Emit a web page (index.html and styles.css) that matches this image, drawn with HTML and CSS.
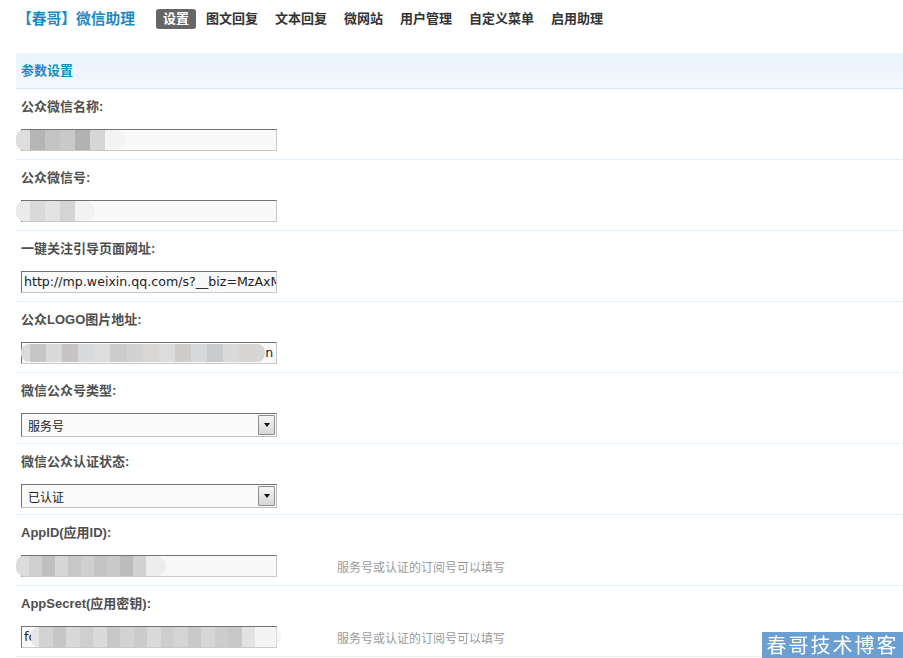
FILE: index.html
```html
<!DOCTYPE html>
<html lang="zh-CN">
<head>
<meta charset="utf-8">
<title>【春哥】微信助理 - 设置</title>
<link rel="stylesheet" href="styles.css">
</head>
<body>
<header class="topbar">
  <h1 class="brand">【春哥】微信助理</h1>
  <nav class="nav">
    <a class="nav-item active">设置</a>
    <a class="nav-item">图文回复</a>
    <a class="nav-item">文本回复</a>
    <a class="nav-item">微网站</a>
    <a class="nav-item">用户管理</a>
    <a class="nav-item">自定义菜单</a>
    <a class="nav-item">启用助理</a>
  </nav>
</header>

<section class="panel">
  <div class="panel-head">参数设置</div>

  <div class="row">
    <div class="label">公众微信名称:</div>
    <div class="line">
      <div class="field">
        <span class="mosaic m1">
          <i class="cap" style="background:#dedede"></i><i style="background:#b5b5b5"></i><i style="background:#c4c4c4"></i><i style="background:#c9c9c9"></i><i style="background:#b2b2b2"></i><i style="background:#d6d6d6"></i><i class="fade" style="background:#eeeeee"></i>
        </span>
      </div>
    </div>
  </div>

  <div class="row">
    <div class="label">公众微信号:</div>
    <div class="line">
      <div class="field">
        <span class="mosaic m2">
          <i class="cap" style="background:#ebebeb"></i><i style="background:#d9d9d9"></i><i style="background:#e3e3e3"></i><i style="background:#d4d4d4"></i><i class="fade" style="background:#ededed"></i>
        </span>
      </div>
    </div>
  </div>

  <div class="row">
    <div class="label">一键关注引导页面网址:</div>
    <div class="line">
      <div class="field"><span class="value">http://mp.weixin.qq.com/s?__biz=MzAxM</span></div>
    </div>
  </div>

  <div class="row">
    <div class="label">公众LOGO图片地址:</div>
    <div class="line">
      <div class="field">
        <span class="mosaic m4">
          <i class="cap" style="background:#dcdcdc"></i><i style="background:#c6c6c6"></i><i style="background:#dadada"></i><i style="background:#c9c3c3"></i><i style="background:#d8dadc"></i><i style="background:#dedede"></i><i style="background:#cccccc"></i><i style="background:#d2d2d2"></i><i style="background:#dad6d6"></i><i style="background:#dcdcdc"></i><i style="background:#d1cccc"></i><i style="background:#d6d8da"></i><i style="background:#c9cacc"></i><i style="background:#dadada"></i><i style="background:#d7d4d4"></i><i class="endcap" style="background:#d6d6d6"></i>
        </span><span class="value tail">n</span>
      </div>
    </div>
  </div>

  <div class="row">
    <div class="label">微信公众号类型:</div>
    <div class="line">
      <div class="select">
        <span class="select-text">服务号</span>
        <span class="select-btn"><span class="tri"></span></span>
      </div>
    </div>
  </div>

  <div class="row">
    <div class="label">微信公众认证状态:</div>
    <div class="line">
      <div class="select">
        <span class="select-text">已认证</span>
        <span class="select-btn"><span class="tri"></span></span>
      </div>
    </div>
  </div>

  <div class="row">
    <div class="label">AppID(应用ID):</div>
    <div class="line">
      <div class="field">
        <span class="mosaic m7">
          <i class="cap" style="background:#dcdcdc"></i><i style="background:#cfcfcf"></i><i style="background:#bfbfbf"></i><i style="background:#d6d6d6"></i><i style="background:#c7c7c7"></i><i style="background:#d0d0d0"></i><i style="background:#c4c4c4"></i><i style="background:#c9c9c9"></i><i style="background:#bcbcbc"></i><i style="background:#d2d2d2"></i><i class="fade" style="background:#e4e4e4"></i>
        </span>
      </div>
      <span class="hint">服务号或认证的订阅号可以填写</span>
    </div>
  </div>

  <div class="row">
    <div class="label">AppSecret(应用密钥):</div>
    <div class="line">
      <div class="field">
        <span class="value head">fc</span><span class="mosaic m8">
          <i class="cap" style="background:#e6e6e6"></i><i style="background:#d3d3d3"></i><i style="background:#c6c6c6"></i><i style="background:#d8d8d8"></i><i style="background:#cfcfcf"></i><i style="background:#dadada"></i><i style="background:#c8c8c8"></i><i style="background:#d3d3d3"></i><i style="background:#cbcbcb"></i><i style="background:#d9d9d9"></i><i style="background:#cecece"></i><i style="background:#d4d4d4"></i><i style="background:#c9c9c9"></i><i style="background:#d6d6d6"></i><i style="background:#cdcdcd"></i><i style="background:#c8c8c8"></i><i style="background:#e2e2e2"></i><i class="fade" style="background:#efefef"></i>
        </span>
      </div>
      <span class="hint">服务号或认证的订阅号可以填写</span>
    </div>
  </div>
</section>

<div class="watermark">春哥技术博客</div>
</body>
</html>
```
FILE: styles.css
```css
* { box-sizing: border-box; }

html, body {
  margin: 0;
  padding: 0;
  background: #ffffff;
}

body {
  font-family: "Liberation Sans", "Noto Sans CJK SC", sans-serif;
  font-size: 13px;
  color: #333;
  overflow: hidden;
}

/* ---------- top bar ---------- */
.topbar {
  height: 53px;
  padding: 9px 0 0 17px;
  display: flex;
  align-items: flex-start;
}

.brand {
  margin: 0;
  font-size: 14.75px;
  line-height: 22px;
  height: 22px;
  font-weight: bold;
  color: #1b8bc4;
  margin-top: -1px;
}

.nav {
  display: flex;
  gap: 3px;
  margin-left: 21px;
}

.nav-item {
  display: block;
  height: 20px;
  line-height: 20px;
  padding: 0 7px;
  font-size: 13px;
  font-weight: bold;
  color: #333;
  border-radius: 3px;
  cursor: pointer;
}

.nav-item.active {
  background: #666666;
  color: #ffffff;
}

/* ---------- panel ---------- */
.panel {
  margin-left: 16px;
}

.panel-head {
  height: 36px;
  line-height: 35px;
  padding-left: 5px;
  font-size: 13px;
  font-weight: bold;
  color: #1b8bc4;
  background: linear-gradient(#ebf3fb, #f3f8fd);
  border-bottom: 1px dotted #c6d8e6;
}

.row {
  height: 71px;
  padding: 9px 0 0 5px;
  border-bottom: 1px dotted #d4e1ea;
}

.label {
  height: 18px;
  line-height: 18px;
  margin-bottom: 13px;
  font-size: 13px;
  font-weight: bold;
  color: #4f4f4f;
}

.line {
  display: flex;
  align-items: center;
}

/* ---------- text field ---------- */
.field {
  width: 256px;
  height: 22px;
  flex: none;
  display: flex;
  align-items: center;
  background: #f9f9f9;
  border-style: solid;
  border-width: 1px;
  border-color: #727272 #c9c9c9 #c9c9c9 #727272;
  overflow: visible;
  white-space: nowrap;
}

.value {
  display: block;
  padding-left: 2px;
  font-family: "DejaVu Sans", "Liberation Sans", sans-serif;
  font-size: 12.6px;
  color: #222;
  overflow: hidden;
  width: 100%;
  line-height: 20px;
}

.value.tail {
  width: auto;
  padding-left: 0;
}

.value.head {
  width: auto;
  flex: none;
  padding-left: 2px;
}

.mosaic {
  display: flex;
  height: 20px;
  flex: none;
}

.mosaic i {
  display: block;
  width: 15px;
  height: 20px;
}

.mosaic i.cap {
  width: 14px;
  border-radius: 8px 0 0 8px;
}

.mosaic i.fade {
  width: 20px;
  border-radius: 0 10px 10px 0;
  opacity: .6;
}

.mosaic i.endcap {
  width: 10px;
  border-radius: 0 8px 8px 0;
}

.m1 { margin-left: -6px; }
.m2 { margin-left: -6px; }
.m4 { margin-left: -1px; height: 18px; }
.m4 i { height: 18px; width: 16.1px; }
.m4 i.cap { width: 9px; }
.m7 { margin-left: -6px; }
.m7 i { width: 13px; }
.m7 i.cap { width: 13px; }
.m8 { margin-left: -4px; }
.m8 i { width: 13.5px; }
.m8 i.cap { width: 8px; }
.m8 i.fade { width: 26px; }

/* ---------- select ---------- */
.select {
  width: 256px;
  height: 24px;
  flex: none;
  display: flex;
  align-items: center;
  justify-content: space-between;
  background: #fafafa;
  border-style: solid;
  border-width: 1px;
  border-color: #727272 #bdbdbd #bdbdbd #727272;
  padding-right: 1px;
}

.select-text {
  padding-left: 6px;
  font-family: "Noto Sans CJK SC", sans-serif;
  font-size: 12px;
  color: #222;
}

.select-btn {
  width: 17px;
  height: 20px;
  display: flex;
  align-items: center;
  justify-content: center;
  background: linear-gradient(#f6f6f6, #d6d6d6);
  border: 1px solid #8c8c8c;
  border-radius: 1px;
}

.tri {
  width: 0;
  height: 0;
  border-left: 3.5px solid transparent;
  border-right: 3.5px solid transparent;
  border-top: 4px solid #111;
}

/* ---------- hint ---------- */
.hint {
  margin-left: 60px;
  font-family: "Noto Sans CJK SC", sans-serif;
  font-size: 12px;
  color: #9a9a9a;
}

/* ---------- watermark ---------- */
.watermark {
  position: fixed;
  right: 0;
  bottom: 0;
  width: 141px;
  height: 26px;
  display: flex;
  align-items: center;
  justify-content: center;
  background: #6a9fd3;
  color: #ffffff;
  font-family: "Noto Sans CJK SC", serif;
  font-size: 20px;
  line-height: 20px;
  letter-spacing: 2px;
  white-space: nowrap;
}
```
